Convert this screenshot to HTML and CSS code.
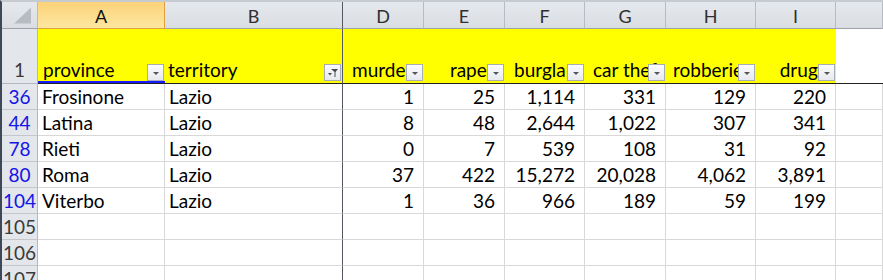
FILE: index.html
```html
<!DOCTYPE html>
<html lang="en">
<head>
    <meta charset="UTF-8">
    <title>Crimes - Lazio</title>
    <link rel="stylesheet" href="styles.css">
</head>
<body>
    <div class="sheet">
        <div class="row col-heads">
            <div class="corner"><span class="corner-tri"></span></div>
            <div class="ch selected">A</div>
            <div class="ch frozen">B</div>
            <div class="ch">D</div>
            <div class="ch">E</div>
            <div class="ch">F</div>
            <div class="ch">G</div>
            <div class="ch">H</div>
            <div class="ch">I</div>
            <div class="ch last"></div>
        </div>

        <div class="row head-row">
            <div class="rh dark">1</div>
            <div class="c hd active pl5">province<span class="filter"></span></div>
            <div class="c hd frozen pl3">territory<span class="filter funnel"><svg width="10" height="9" viewBox="0 0 10 9"><path d="M3 1h7L7.5 4v5h-1V4z" fill="#4a4a4a"/><path d="M0 5h4L2 7.5z" fill="#4a4a4a"/></svg></span></div>
            <div class="c hd pl9">murders<span class="filter"></span></div>
            <div class="c hd right">rapes<span class="filter"></span></div>
            <div class="c hd pl9">burglary<span class="filter"></span></div>
            <div class="c hd pl8">car theft<span class="filter"></span></div>
            <div class="c hd pl7">robberies<span class="filter"></span></div>
            <div class="c hd right">drugs<span class="filter"></span></div>
            <div class="c hd blank"></div>
        </div>

        <div class="row">
            <div class="rh">36</div>
            <div class="c">Frosinone</div>
            <div class="c frozen">Lazio</div>
            <div class="c num">1</div>
            <div class="c num">25</div>
            <div class="c num">1,114</div>
            <div class="c num">331</div>
            <div class="c num">129</div>
            <div class="c num">220</div>
            <div class="c"></div>
        </div>
        <div class="row">
            <div class="rh">44</div>
            <div class="c">Latina</div>
            <div class="c frozen">Lazio</div>
            <div class="c num">8</div>
            <div class="c num">48</div>
            <div class="c num">2,644</div>
            <div class="c num">1,022</div>
            <div class="c num">307</div>
            <div class="c num">341</div>
            <div class="c"></div>
        </div>
        <div class="row">
            <div class="rh">78</div>
            <div class="c">Rieti</div>
            <div class="c frozen">Lazio</div>
            <div class="c num">0</div>
            <div class="c num">7</div>
            <div class="c num">539</div>
            <div class="c num">108</div>
            <div class="c num">31</div>
            <div class="c num">92</div>
            <div class="c"></div>
        </div>
        <div class="row">
            <div class="rh">80</div>
            <div class="c">Roma</div>
            <div class="c frozen">Lazio</div>
            <div class="c num">37</div>
            <div class="c num">422</div>
            <div class="c num">15,272</div>
            <div class="c num">20,028</div>
            <div class="c num">4,062</div>
            <div class="c num">3,891</div>
            <div class="c"></div>
        </div>
        <div class="row">
            <div class="rh">104</div>
            <div class="c">Viterbo</div>
            <div class="c frozen">Lazio</div>
            <div class="c num">1</div>
            <div class="c num">36</div>
            <div class="c num">966</div>
            <div class="c num">189</div>
            <div class="c num">59</div>
            <div class="c num">199</div>
            <div class="c"></div>
        </div>
        <div class="row">
            <div class="rh dark">105</div>
            <div class="c"></div>
            <div class="c frozen"></div>
            <div class="c"></div>
            <div class="c"></div>
            <div class="c"></div>
            <div class="c"></div>
            <div class="c"></div>
            <div class="c"></div>
            <div class="c"></div>
        </div>
        <div class="row">
            <div class="rh dark">106</div>
            <div class="c"></div>
            <div class="c frozen"></div>
            <div class="c"></div>
            <div class="c"></div>
            <div class="c"></div>
            <div class="c"></div>
            <div class="c"></div>
            <div class="c"></div>
            <div class="c"></div>
        </div>
        <div class="row">
            <div class="rh dark">107</div>
            <div class="c"></div>
            <div class="c frozen"></div>
            <div class="c"></div>
            <div class="c"></div>
            <div class="c"></div>
            <div class="c"></div>
            <div class="c"></div>
            <div class="c"></div>
            <div class="c"></div>
        </div>
    </div>
</body>
</html>
```

FILE: styles.css
```css
body {
    margin: 0;
    background: #fff;
    font-family: Lato, "Open Sans", sans-serif;
    font-size: 19px;
    color: #000;
    overflow: hidden;
}
.sheet {
    border-left: 2px solid #3e4856;
    border-top: 2px solid #c6cbd1;
    height: 280px;
    box-sizing: border-box;
}
.row {
    display: grid;
    grid-template-columns: 36px 127px 178px 81px 81px 80px 81px 90px 80px 1fr;
    height: 26px;
}
.row > div {
    box-sizing: border-box;
    position: relative;
    overflow: hidden;
    white-space: nowrap;
    border-right: 1px solid #d8d8d8;
    border-bottom: 1px solid #d8d8d8;
    display: flex;
    align-items: flex-end;
    padding: 0 4px 2px 4px;
    line-height: 20px;
}

/* column letters */
.col-heads {
    height: 27px;
}
.col-heads > div {
    background: linear-gradient(#e5e8ec, #dadee3);
    border-right: 1px solid #b8bcc2;
    border-bottom: 1px solid #9ea3a9;
    justify-content: center;
    align-items: center;
    padding: 1px 0 0 0;
    color: #2f2f2f;
    font-size: 18px;
}
.col-heads > .selected {
    background: linear-gradient(#fcd27a, #fde7a0);
    border-right: 1px solid #e2a03e;
    border-bottom: 1px solid #e2a03e;
    color: #111;
}
.corner-tri {
    width: 17px;
    height: 16px;
    margin-left: 6px;
    background: #b7bcc3;
    clip-path: polygon(100% 0, 100% 100%, 0 100%);
}

/* row numbers */
.row > .rh {
    background: #e3e6ea;
    border-right: 1px solid #b4b8be;
    border-bottom: 1px solid #c3c7cc;
    justify-content: center;
    padding: 0 0 2px 0;
    color: #1414e6;
}
.row > .rh.dark {
    color: #3a3a3a;
}

/* header row */
.head-row {
    height: 55px;
}
.head-row > .c {
    background: #ffff00;
    border-right: none;
    border-bottom: 1px solid #222;
    padding-bottom: 3px;
}
.head-row > .c.active {
    box-shadow: inset 0 -2px 0 #1a1aff;
}
.head-row > .blank {
    background: #fff;
}
.head-row > .rh {
    border-bottom: 1px solid #b4b8be;
    padding-bottom: 3px;
}
.head-row > .pl3 { padding-left: 3px; }
.head-row > .pl5 { padding-left: 5px; }
.head-row > .pl7 { padding-left: 7px; }
.head-row > .pl8 { padding-left: 8px; }
.head-row > .pl9 { padding-left: 9px; }
.head-row > .c.right {
    justify-content: flex-end;
    padding-right: 10px;
}

.filter {
    position: absolute;
    right: 1px;
    bottom: 2px;
    width: 17px;
    height: 17px;
    box-sizing: border-box;
    border: 1px solid #a7adb5;
    background: linear-gradient(#fbfcfd, #e6e9ee);
    display: flex;
    align-items: center;
    justify-content: center;
}
.filter::after {
    content: "";
    border-left: 3px solid transparent;
    border-right: 3px solid transparent;
    border-top: 3px solid #555;
    margin-top: 1px;
}
.filter.funnel::after {
    display: none;
}

/* data cells */
.c.num {
    justify-content: flex-end;
    padding-right: 9px;
}
.row > .frozen,
.head-row > .c.frozen {
    border-right: 1px solid #555a60;
}
```
